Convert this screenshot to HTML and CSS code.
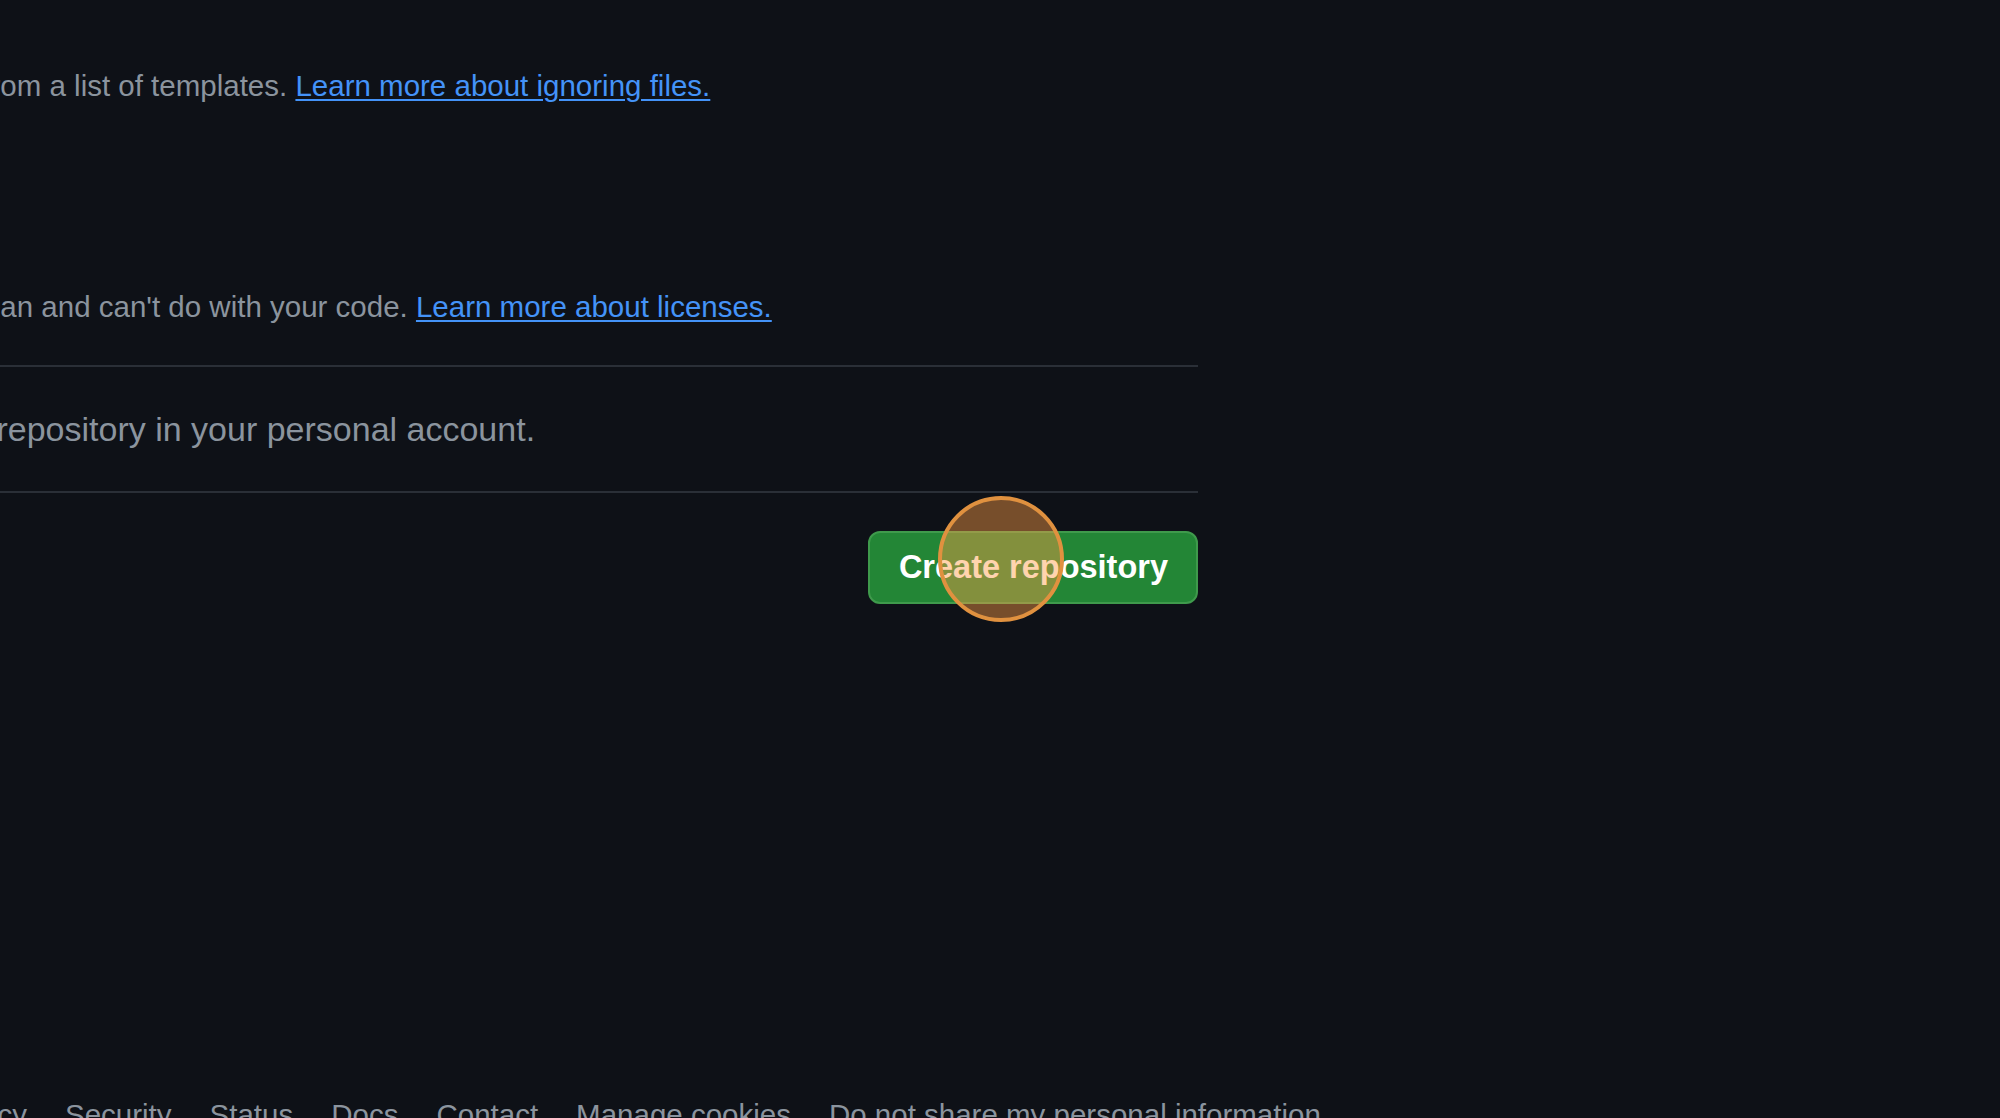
FILE: index.html
```html
<!DOCTYPE html>
<html lang="en">
<head>
<meta charset="utf-8">
<title>Create a new repository</title>
<link rel="stylesheet" href="styles.css">
</head>
<body>
<main class="main">
  <p class="note note-first">Choose which files not to track from a list of templates. <a href="#" class="link">Learn more about ignoring files.</a></p>
  <p class="note note-second">A license tells others what they can and can't do with your code. <a href="#" class="link">Learn more about licenses.</a></p>
  <hr class="divider">
  <div class="info">
    <svg class="info-icon" viewBox="0 0 16 16" width="32" height="32" aria-hidden="true"><path fill="currentColor" d="M0 8a8 8 0 1 1 16 0A8 8 0 0 1 0 8Zm8-6.5a6.5 6.5 0 1 0 0 13 6.5 6.5 0 0 0 0-13ZM6.5 7.750A.75.75 0 0 1 7.25 7h1a.75.75 0 0 1 .75.75v2.75h.25a.75.75 0 0 1 0 1.5h-2a.75.75 0 0 1 0-1.5h.25v-2h-.25a.75.75 0 0 1-.75-.75ZM8 6a1 1 0 1 1 0-2 1 1 0 0 1 0 2Z"/></svg>
    <span>You are creating a public repository in your personal account.</span>
  </div>
  <hr class="divider">
  <div class="actions">
    <button class="btn-primary" type="button">Create repository<span class="click-ring" aria-hidden="true"></span></button>
  </div>
</main>
<footer class="footer">
  <div class="footer-lead">
    <span class="footer-item">© 2024 GitHub, Inc.</span>
    <a href="#" class="footer-item">Terms</a>
    <a href="#" class="footer-item">Privacy</a>
  </div>
  <a href="#" class="footer-item">Security</a>
  <a href="#" class="footer-item">Status</a>
  <a href="#" class="footer-item">Docs</a>
  <a href="#" class="footer-item">Contact</a>
  <a href="#" class="footer-item">Manage cookies</a>
  <a href="#" class="footer-item">Do not share my personal information</a>
</footer>
</body>
</html>
```

FILE: styles.css
```css
html, body {
  margin: 0;
  padding: 0;
  background: #0e1117;
  height: 1118px;
  overflow: hidden;
}

body {
  font-family: "Liberation Sans", Arial, sans-serif;
  color: #8b949e;
}

.main {
  margin-left: -426px;
  width: 1624px;
  padding-top: 66px;
  display: flex;
  flex-direction: column;
}

.note {
  margin: 0;
  font-size: 29.5px;
  line-height: 40px;
  white-space: nowrap;
  color: #8b949e;
}

.note-second {
  margin-top: 181px;
}

.link {
  color: #4493f8;
  text-decoration: underline;
  text-decoration-thickness: 2px;
  text-underline-offset: 3px;
}

.divider {
  border: 0;
  height: 2px;
  background: #2a2f37;
  margin: 38px 0 0 0;
}

.info {
  margin-top: 40px;
  display: flex;
  align-items: center;
  font-size: 34px;
  line-height: 44px;
  white-space: nowrap;
  color: #8b949e;
}

.info-icon {
  flex: none;
  margin-right: 8px;
}

.info + .divider {
  margin-top: 40px;
}

.actions {
  margin-top: 38px;
  display: flex;
  justify-content: flex-end;
}

.btn-primary {
  position: relative;
  font-family: "Liberation Sans", Arial, sans-serif;
  font-weight: 700;
  font-size: 32.5px;
  line-height: 69px;
  height: 73px;
  padding: 0 28px 0 29px;
  color: #ffffff;
  background: #238636;
  border: 2px solid #3f9a4c;
  border-radius: 12px;
  white-space: nowrap;
  cursor: pointer;
}

.click-ring {
  position: absolute;
  left: 68px;
  top: -37px;
  width: 118px;
  height: 118px;
  border: 4px solid #e0913f;
  border-radius: 50%;
  background: rgba(255, 156, 70, 0.44);
  pointer-events: none;
}

.footer {
  margin-top: 491px;
  padding-left: 27px;
  display: flex;
  gap: 38px;
  font-size: 29.5px;
  line-height: 40px;
  white-space: nowrap;
}

.footer-lead {
  width: 0;
  min-width: 0;
  flex: none;
  display: flex;
  justify-content: flex-end;
  gap: 38px;
}

.footer-lead > * {
  flex: none;
}

.footer-item {
  color: #8b949e;
  text-decoration: none;
}
```
